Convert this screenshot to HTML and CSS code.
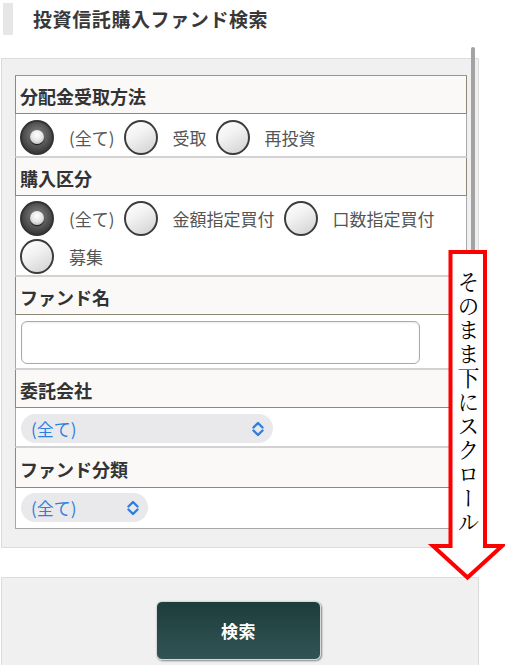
FILE: index.html
```html
<!DOCTYPE html>
<html lang="ja">
<head>
<meta charset="utf-8">
<title>投資信託購入ファンド検索</title>
<link rel="stylesheet" href="styles.css">
</head>
<body>
<div class="page">
  <div class="title">
    <span class="title-mark"></span>
    <h1 class="title-text">投資信託購入ファンド検索</h1>
  </div>

  <div class="panel">
    <div class="table">
      <div class="th">分配金受取方法</div>
      <div class="td td-radio r1">
        <label class="opt"><span class="radio on"></span><span class="lbl">(全て)</span></label>
        <label class="opt"><span class="radio"></span><span class="lbl">受取</span></label>
        <label class="opt"><span class="radio"></span><span class="lbl">再投資</span></label>
      </div>

      <div class="th">購入区分</div>
      <div class="td td-radio r2">
        <label class="opt"><span class="radio on"></span><span class="lbl">(全て)</span></label>
        <label class="opt"><span class="radio"></span><span class="lbl">金額指定買付</span></label>
        <label class="opt"><span class="radio"></span><span class="lbl">口数指定買付</span></label>
        <label class="opt"><span class="radio"></span><span class="lbl">募集</span></label>
      </div>

      <div class="th">ファンド名</div>
      <div class="td td-input">
        <input class="text-input" type="text">
      </div>

      <div class="th">委託会社</div>
      <div class="td td-select r4">
        <div class="select wide">
          <span class="sel-text">(全て)</span>
          <svg class="chev" width="12" height="16" viewBox="0 0 12 16"><path d="M1.5 6.5 L6 2 L10.5 6.5 M1.5 9.5 L6 14 L10.5 9.5" fill="none" stroke="#2f7fe0" stroke-width="2.4" stroke-linecap="round" stroke-linejoin="round"/></svg>
        </div>
      </div>

      <div class="th th5">ファンド分類</div>
      <div class="td td-select r5 last">
        <div class="select narrow">
          <span class="sel-text">(全て)</span>
          <svg class="chev" width="12" height="16" viewBox="0 0 12 16"><path d="M1.5 6.5 L6 2 L10.5 6.5 M1.5 9.5 L6 14 L10.5 9.5" fill="none" stroke="#2f7fe0" stroke-width="2.4" stroke-linecap="round" stroke-linejoin="round"/></svg>
        </div>
      </div>
    </div>
  </div>

  <div class="panel panel-btn">
    <button class="btn" type="button">検索</button>
  </div>

  <div class="scrollbar"></div>

  <svg class="arrow" width="80" height="340" viewBox="427 245 80 340">
    <polygon points="450.5,252 485,252 485,546 502,546 467.5,577.5 433,546 450.5,546" fill="#ffffff" stroke="#ff0000" stroke-width="4" stroke-linejoin="miter"/>
  </svg>
  <div class="arrow-text">そのまま下にスクロール</div>
</div>
</body>
</html>
```

FILE: styles.css
```css
* { box-sizing: border-box; }

html, body {
  margin: 0;
  padding: 0;
  background: #ffffff;
}

body {
  font-family: "Noto Sans CJK JP", "Noto Sans", sans-serif;
  color: #333333;
}

.page {
  position: relative;
  width: 505px;
  height: 665px;
  overflow: hidden;
}

.title {
  display: flex;
  align-items: center;
  padding: 3px 0 0 3px;
}

.title-mark {
  width: 10px;
  height: 32px;
  background: #e6e6e6;
  margin-right: 20px;
}

.title-text {
  margin: 0;
  font-size: 19px;
  font-weight: 700;
  letter-spacing: 0.6px;
  color: #383838;
  line-height: 32px;
}

.panel {
  width: 478px;
  margin: 23px 0 0 1px;
  background: #f0f0f0;
  border: 1px solid #dcdcdc;
  padding: 16px 11px 18px 13px;
}

.table {
  width: 452px;
  border-top: 1px solid #9a9683;
}

.th {
  height: 38px;
  display: flex;
  align-items: center;
  padding: 3px 0 0 4px;
  background: #faf9f7;
  border-left: 1px solid #8e8977;
  border-right: 1px solid #8e8977;
  border-bottom: 1px solid #8e8977;
  font-size: 18px;
  font-weight: 700;
  color: #333333;
}

.th5 { height: 40px; }

.td {
  background: #ffffff;
  border-left: 1px solid #a8a8a8;
  border-right: 1px solid #a8a8a8;
  border-bottom: 2px solid #d2d2d2;
}

.td.last { border-bottom: 1px solid #a8a8a8; }

.td-radio {
  display: flex;
  flex-wrap: wrap;
  row-gap: 2px;
  padding: 4px 0 0 4px;
}

.r1 { height: 44px; }
.r2 { height: 81px; }

.opt {
  display: flex;
  align-items: center;
  margin-right: 9px;
}

.radio {
  position: relative;
  width: 34px;
  height: 35px;
  border-radius: 50%;
  border: 2px solid #3c3c3c;
  background: linear-gradient(150deg, #ffffff 0%, #f2f2f2 40%, #d0d0d0 100%);
  margin-right: 15px;
  flex: none;
}

.radio.on {
  border-color: #333333;
  background: radial-gradient(circle at 50% 42%, #8a8a8a 0%, #5a5a5a 45%, #3a3a3a 75%, #2a2a2a 100%);
}

.radio.on::after {
  content: "";
  position: absolute;
  left: 50%;
  top: 50%;
  width: 14px;
  height: 14px;
  margin: -7px 0 0 -7px;
  border-radius: 50%;
  background: radial-gradient(circle at 50% 35%, #ffffff 0%, #e6e6e6 50%, #a8a8a8 100%);
  box-shadow: 0 1px 1px #111111;
}

.lbl {
  font-size: 17px;
  color: #555555;
  white-space: nowrap;
}

.td-input {
  height: 55px;
  padding: 6px 0 0 5px;
}

.text-input {
  display: block;
  width: 399px;
  height: 43px;
  border: 1px solid #a9a9a9;
  border-radius: 6px;
  background: #ffffff;
  box-shadow: inset 0 1px 2px rgba(0, 0, 0, 0.08);
  margin: 0;
}

.td-select {
  padding-left: 5px;
}

.r4 { height: 40px; padding-top: 6px; }
.r5 { height: 41px; padding-top: 5px; }

.select {
  display: flex;
  align-items: center;
  justify-content: space-between;
  height: 29px;
  border-radius: 15px;
  background: #e9e9eb;
  padding: 0 9px 0 10px;
}

.select.wide { width: 252px; }
.select.narrow { width: 127px; }

.sel-text {
  font-size: 17px;
  color: #2f7fe0;
}

.chev { display: block; }

.panel-btn {
  margin-top: 29px;
  padding: 23px 3px 20px 0;
  display: flex;
  justify-content: center;
  border-bottom: none;
}

.btn {
  width: 165px;
  height: 59px;
  border-radius: 6px;
  border: 1px solid #d8d8d8;
  background: linear-gradient(180deg, #1d3c3c 0%, #2a4b4b 60%, #315353 100%);
  box-shadow: 1px 1px 2px rgba(0, 0, 0, 0.45);
  color: #ffffff;
  font-family: "Noto Sans CJK JP", sans-serif;
  font-size: 17px;
  font-weight: 700;
  letter-spacing: 0.5px;
}

.scrollbar {
  position: absolute;
  left: 471px;
  top: 47px;
  width: 4px;
  height: 220px;
  border-radius: 2px 2px 0 0;
  background: #a3a3a3;
}

.arrow {
  position: absolute;
  left: 427px;
  top: 245px;
}

.arrow-text {
  position: absolute;
  left: 456px;
  top: 271px;
  writing-mode: vertical-rl;
  font-family: "Noto Serif CJK JP", "Liberation Serif", "Noto Sans CJK JP", serif;
  font-size: 22px;
  letter-spacing: 2px;
  line-height: 24px;
  color: #000000;
}
```
